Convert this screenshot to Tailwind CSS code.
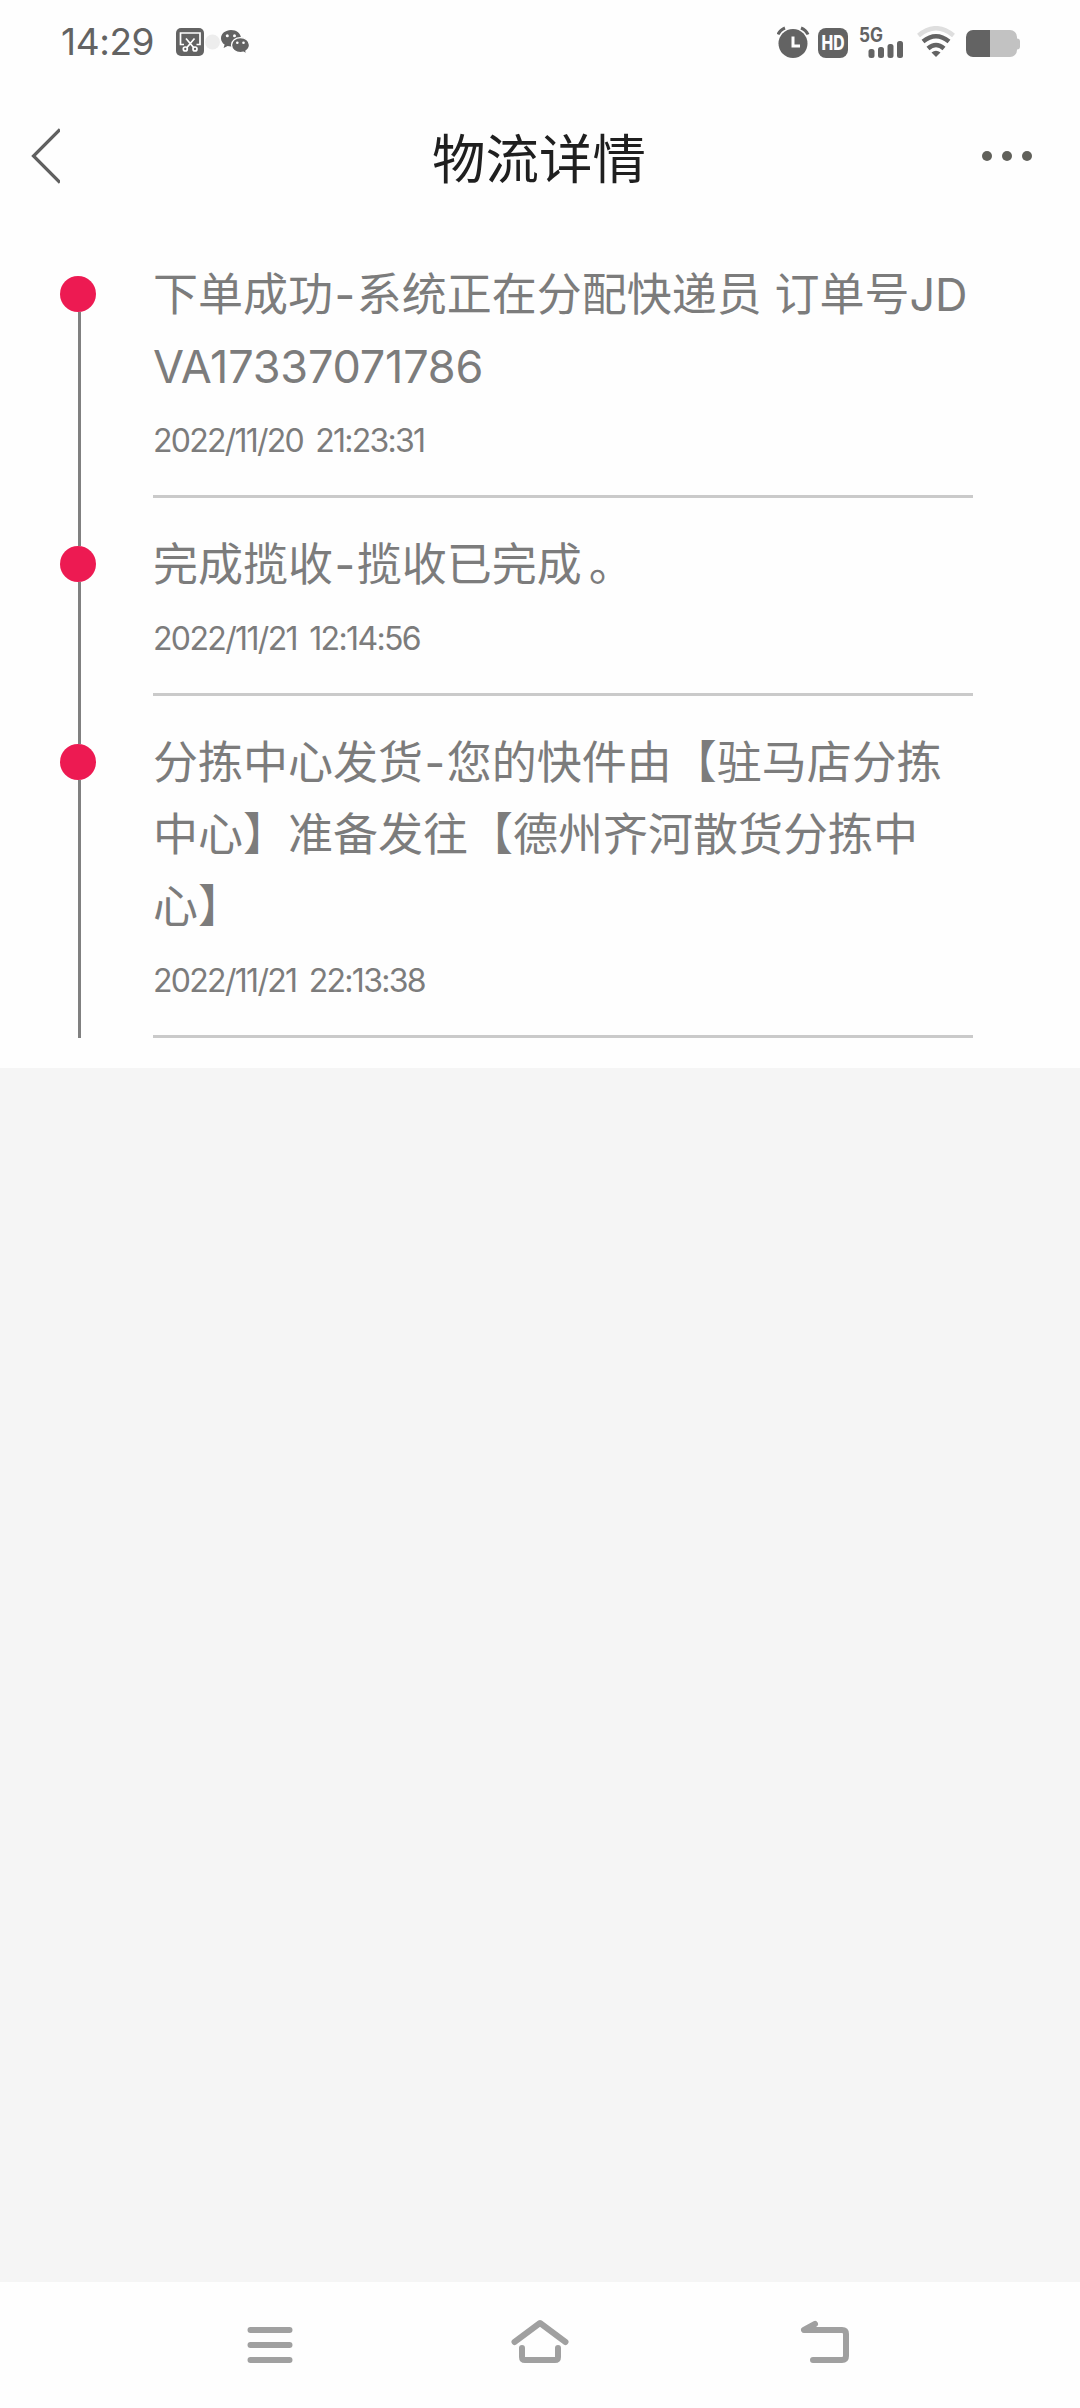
<!DOCTYPE html>
<html lang="zh-CN">

<head>
  <meta charset="UTF-8" />
  <meta name="viewport" content="width=device-width, initial-scale=1.0" />
  <title>物流详情</title>
  <script src="https://cdn.jsdelivr.net/npm/@tailwindcss/browser@4"></script>
</head>

<body class="bg-[#f5f5f5] font-['Inter','Noto_Sans_CJK_SC',sans-serif]">
  <div class="flex flex-col w-[1080px] h-[2408px]">

    <!-- Status bar -->
    <div class="flex items-center justify-between h-[84px] pl-[61px] pr-[60px] bg-[#fefefe] text-[#636363]">
      <div class="flex items-center">
        <span class="w-[115px] text-[37px] leading-[84px] tracking-[-0.4px] whitespace-nowrap">14:29</span>
        <svg class="w-[76px] h-[30px]" viewBox="0 0 76 30">
          <circle cx="36.500" cy="15" r="7.500" fill="#ededed" />
          <rect x="0" y="1" width="28" height="28" rx="5" fill="#636363" />
          <g fill="none" stroke="#fff" stroke-width="1.700">
            <path d="M8 17.500H4.500V6H24v11.500h-3.500" />
            <path d="M10 11.500l8 9.500M18.500 11.500l-8 9.500" />
            <circle cx="9.300" cy="22" r="2" />
            <circle cx="19" cy="22" r="2" />
          </g>
          <path d="M55 3c-5.500 0-10 3.600-10 8.200 0 2.600 1.400 4.900 3.600 6.400L47.600 21l4-2c1 .3 2.200.5 3.400.5C61 19.500 65 16 65 11.200S60.500 3 55 3z" fill="#636363" />
          <path d="M64.500 10.600c-5 0-9 3.300-9 7.500s4 7.500 9 7.500c1 0 2-.1 2.900-.4l3.400 1.900-.9-3.100c2.200-1.400 3.600-3.500 3.600-5.900 0-4.200-4-7.500-9-7.500z" fill="#636363" stroke="#fefefe" stroke-width="1.300" />
          <g fill="#fefefe">
            <circle cx="51.300" cy="8.800" r="1.500" />
            <circle cx="58.500" cy="8.800" r="1.500" />
            <circle cx="61.300" cy="15.800" r="1.300" />
            <circle cx="67.500" cy="15.800" r="1.300" />
          </g>
        </svg>
      </div>

      <div class="flex items-center">
        <!-- Alarm -->
        <svg class="w-[34px] h-[34px] mr-[7px]" viewBox="0 0 34 34">
          <circle cx="16" cy="18.500" r="14.500" fill="#636363" />
          <path d="M1 9.500Q3 5 8 3M31 9.500Q29 5 24 3" fill="none" stroke="#636363" stroke-width="3" />
          <path d="M16 11.500v9.500h7" fill="none" stroke="#fefefe" stroke-width="3" />
        </svg>
        <!-- HD -->
        <svg class="w-[30px] h-[30px] mr-[11px] mt-[1px] overflow-visible" viewBox="0 0 30 30">
          <rect width="30" height="30" rx="8" fill="#636363" />
          <text x="3.500" y="22" font-size="19.500" font-weight="800" textLength="23" lengthAdjust="spacingAndGlyphs" fill="#fefefe">HD</text>
        </svg>
        <!-- Signal -->
        <svg class="w-[46px] h-[34px] mr-[12px] overflow-visible" viewBox="0 0 46 34">
          <text x="0" y="17" font-size="19.500" font-weight="700" textLength="24" lengthAdjust="spacingAndGlyphs" fill="#636363">5G</text>
          <rect x="9.500" y="24" width="6" height="9" rx="2.500" fill="#636363" />
          <rect x="19" y="22" width="6" height="11" rx="2.500" fill="#636363" />
          <rect x="28.500" y="19" width="6" height="14" rx="2.500" fill="#636363" />
          <rect x="38" y="16" width="6" height="17" rx="2.500" fill="#636363" />
        </svg>
        <!-- Wifi -->
        <svg class="w-[38px] h-[32px] mr-[11px]" viewBox="0 0 38 32">
          <path d="M1.500 9.500Q19-5 36.500 9.500" fill="none" stroke="#dedede" stroke-width="4.500" />
          <path d="M6 15.500Q19 5 32 15.500" fill="none" stroke="#636363" stroke-width="4.500" />
          <path d="M11 22.500Q19 15.500 27 22.500" fill="none" stroke="#636363" stroke-width="4.500" />
          <path d="M19 31l-4.500-4.500Q19 23 23.500 26.500z" fill="#636363" />
        </svg>
        <!-- Battery -->
        <svg class="w-[54px] h-[28px] mt-[3px]" viewBox="0 0 54 28">
          <path d="M24 0h20a7 7 0 0 1 7 7v1.500q3 0 3 3v5q0 3-3 3V20a7 7 0 0 1-7 7H24z" fill="#c2c2c2" />
          <path d="M24 0H7a7 7 0 0 0-7 7v13a7 7 0 0 0 7 7h17z" fill="#636363" />
        </svg>
      </div>
    </div>

    <!-- Title bar -->
    <header class="flex items-center justify-between h-[144px] pl-[31px] pr-[44px] bg-[#fefefe]">
      <svg class="w-[29px] h-[56px]" viewBox="0 0 29 56" fill="none" stroke="#606060" stroke-width="3.200">
        <path d="M29 1.500L2.500 28 29 54.500" />
      </svg>
      <h1 class="pl-[36px] pt-[7px] text-[53.500px] leading-[72px] text-[#1f1f1f]">物流详情</h1>
      <div class="flex gap-[10px] pr-[4px]">
        <span class="size-[10px] rounded-full bg-[#60605a]"></span>
        <span class="size-[10px] rounded-full bg-[#60605a]"></span>
        <span class="size-[10px] rounded-full bg-[#60605a]"></span>
      </div>
    </header>

    <!-- Tracking timeline -->
    <main class="pt-[30px] bg-[#fefefe] text-[#7c7c7c]">
      <div class="flex pl-[60px]">
        <div class="flex flex-col items-center w-[39px] mr-[54px] pt-[18px]">
          <span class="size-[36px] mr-[3px] rounded-full bg-[#ed1a52]"></span>
          <span class="w-[3px] grow bg-[#808080]"></span>
        </div>
        <div class="w-[820px] mb-[30px]">
          <div class="pt-[1px] pb-[16px] border-b-[3px] border-[#cacaca]">
            <p class="text-[45px] leading-[72px] whitespace-nowrap">下单成功<span class="px-[1.5px]">-</span>系统正在分配快递员 订单号JD<br /><span class="tracking-[-0.2px]">VA17337071786</span></p>
            <p class="text-[32px] leading-[76px] tracking-[-1.75px] [word-spacing:5px] whitespace-nowrap">2022/11/20 21:23:31</p>
          </div>
        </div>
      </div>

      <div class="flex pl-[60px]">
        <div class="flex flex-col items-center w-[39px] mr-[54px] -mt-[30px]">
          <span class="w-[3px] h-[48px] bg-[#808080]"></span>
          <span class="size-[36px] mr-[3px] rounded-full bg-[#ed1a52]"></span>
          <span class="w-[3px] grow bg-[#808080]"></span>
        </div>
        <div class="w-[820px] mb-[30px]">
          <div class="pt-[1px] pb-[16px] border-b-[3px] border-[#cacaca]">
            <p class="text-[45px] leading-[72px] whitespace-nowrap">完成揽收<span class="px-[1.5px]">-</span>揽收已完成<span class="pl-[7px]">。</span></p>
            <p class="text-[32px] leading-[76px] tracking-[-1.65px] [word-spacing:5px] whitespace-nowrap">2022/11/21 12:14:56</p>
          </div>
        </div>
      </div>

      <div class="flex pl-[60px] pb-[30px]">
        <div class="flex flex-col items-center w-[39px] mr-[54px] -mt-[30px]">
          <span class="w-[3px] h-[48px] bg-[#808080]"></span>
          <span class="size-[36px] mr-[3px] rounded-full bg-[#ed1a52]"></span>
          <span class="w-[3px] grow bg-[#808080]"></span>
        </div>
        <div class="w-[820px]">
          <div class="pt-[1px] pb-[16px] border-b-[3px] border-[#cacaca]">
            <p class="text-[45px] leading-[72px] whitespace-nowrap">分拣中心发货<span class="px-[1.5px]">-</span>您的快件由【驻马店分拣<br />中心】准备发往【德州齐河散货分拣中<br />心】</p>
            <p class="text-[32px] leading-[76px] tracking-[-1.7px] [word-spacing:5px] whitespace-nowrap">2022/11/21 22:13:38</p>
          </div>
        </div>
      </div>
    </main>

    <!-- System navigation -->
    <nav class="flex items-center h-[126px] mt-auto pl-[240px] bg-[#fefefe]">
      <svg class="w-[60px] h-[60px] mr-[210px]" viewBox="0 0 60 60" fill="none" stroke="#a0a0a0" stroke-width="6" stroke-linecap="round">
        <path d="M10.500 15h39M10.500 30h39M10.500 45h39" />
      </svg>
      <svg class="w-[60px] h-[60px] mr-[230px]" viewBox="0 0 60 60" fill="none" stroke="#a0a0a0" stroke-width="6" stroke-linecap="round" stroke-linejoin="round">
        <path d="M4.500 27L30 8l25.500 19" />
        <path d="M12 33v9q0 3 3 3h30q3 0 3-3v-9" />
      </svg>
      <svg class="w-[60px] h-[60px]" viewBox="0 0 60 60" fill="none" stroke="#a0a0a0" stroke-width="6" stroke-linecap="round" stroke-linejoin="round">
        <path d="M15 9L4 15h38q4 0 4 4v22q0 4-4 4H13" />
      </svg>
    </nav>
  </div>
</body>

</html>
